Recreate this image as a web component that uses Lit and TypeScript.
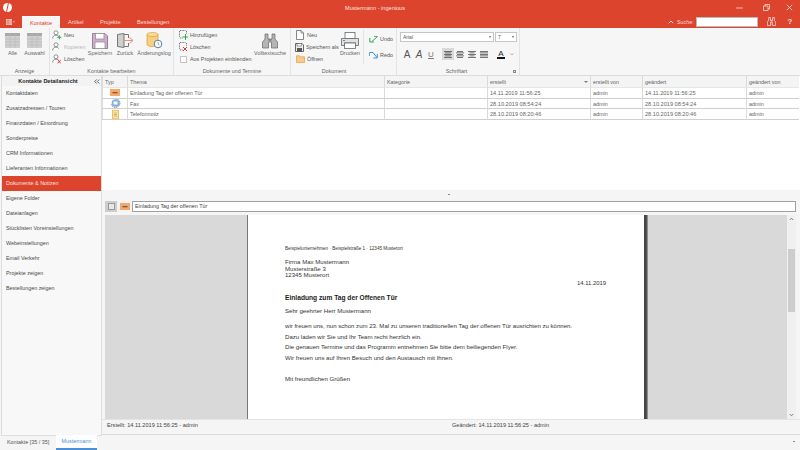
import { LitElement, html, css, svg } from "lit";
import { customElement } from "lit/decorators.js";

const person = (badge: string) => svg`<svg width="10" height="10" viewBox="0 0 10 10">
  <circle cx="4" cy="2.800" r="2" fill="#fff" stroke="#666" stroke-width=".7"/>
  <path d="M.7 8.600c0-2.400 1.400-3.400 3.300-3.400 1.200 0 2.200.4 2.800 1.300" fill="#fff" stroke="#666" stroke-width=".7"/>
  ${badge}</svg>`;
const plus = svg`<path d="M7.300 5.300v4M5.300 7.300h4" stroke="#35a853" stroke-width="1"/>`;
const cross = svg`<path d="M5.600 6l3.200 3.200M8.800 6L5.600 9.200" stroke="#d5392a" stroke-width="1"/>`;

const tableIcon = svg`<svg width="15" height="15" viewBox="0 0 15 15">
  <rect width="15" height="15" fill="#cfcfcf"/><rect width="15" height="3" fill="#a9a9a9"/>
  <path d="M0 6h15M0 9h15M0 12h15M5 0v15M10 0v15" stroke="#bbb" stroke-width=".6"/></svg>`;
const saveIcon = svg`<svg width="16" height="16" viewBox="0 0 16 16">
  <path d="M.5.500h12.500l2.500 2.500v12.500H.5z" fill="#d9a9d6" stroke="#8a8a8a"/>
  <rect x="3.500" y=".5" width="8.500" height="5.500" fill="#fff" stroke="#8a8a8a" stroke-width=".7"/>
  <rect x="3" y="9" width="10" height="6.500" fill="#fff" stroke="#8a8a8a" stroke-width=".7"/></svg>`;
const backIcon = svg`<svg width="17" height="15" viewBox="0 0 17 15">
  <path d="M.5 1.500 7 .5v14l-6.500-1z" fill="#cfcfcf" stroke="#777"/>
  <path d="M7 1.500h4.500v3.500M11.500 10v3.500H7" fill="none" stroke="#777"/>
  <path d="M6.500 7.500h9M12.500 4.500l3.500 3-3.500 3" fill="none" stroke="#f08a7a" stroke-width="1"/></svg>`;
const logIcon = svg`<svg width="17" height="17" viewBox="0 0 17 17">
  <path d="M1 2.500v10c0 1.200 2.500 2 5.500 2s5.500-.8 5.500-2v-10z" fill="#f6cf80" stroke="#e09a2c" stroke-width=".7"/>
  <ellipse cx="6.500" cy="2.500" rx="5.500" ry="2" fill="#f9dd9f" stroke="#e09a2c" stroke-width=".7"/>
  <circle cx="12" cy="12" r="3.800" fill="#fff" stroke="#5d7f9e"/><path d="M12 9.800V12l1.500 1" fill="none" stroke="#5d7f9e" stroke-width=".7"/></svg>`;
const docAdd = (c: any) => svg`<svg width="9" height="10" viewBox="0 0 9 10">
  <path d="M1 .5h5.500M.5 1v6.500M1 8h3M7.500 1v3" stroke="#444" stroke-width=".7" stroke-dasharray="1 .6" fill="none"/>${c}</svg>`;
const binoc = (c: string, w = 16, h = 16) => svg`<svg width="${w}" height="${h}" viewBox="0 0 16 16">
  <path d="M3 1h3v5h4V1h3v5l2.500 3v6H9.500V9h-3v6H.5V9L3 6z" fill="${c === "#fff" ? "none" : "#b5b5b5"}" stroke="${c === "#fff" ? "#fff" : "#666"}" stroke-width="${c === "#fff" ? 1.2 : .7}"/>
  <path d="M6.500 7h3" stroke="${c === "#fff" ? "#fff" : "#666"}"/></svg>`;
const docIcon = svg`<svg width="8" height="10" viewBox="0 0 8 10"><path d="M.5.500h4.500l2.500 2.500v6.500h-7z" fill="#fff" stroke="#555" stroke-width=".7"/><path d="M5 .5V3h2.500" fill="none" stroke="#555" stroke-width=".6"/></svg>`;
const saveAsIcon = svg`<svg width="9" height="9" viewBox="0 0 9 9"><path d="M.5.500h6.500l1.500 1.500v6.500h-8z" fill="#eee" stroke="#444" stroke-width=".8"/><rect x="2" y=".5" width="4.500" height="2.500" fill="#fff" stroke="#444" stroke-width=".5"/><rect x="2" y="5" width="5" height="3.500" fill="#555"/></svg>`;
const folderIcon = svg`<svg width="9" height="8" viewBox="0 0 9 8"><path d="M.5 7.500V.8h3l.8 1h4.200v5.700z" fill="#f8c98d" stroke="#ea9a3e" stroke-width=".7"/></svg>`;
const printIcon = svg`<svg width="18" height="17" viewBox="0 0 18 17">
  <rect x="4" y=".5" width="10" height="6" fill="#fff" stroke="#666" stroke-width=".8"/>
  <path d="M.5 6.500h17v7h-3V11h-11v2.500h-3z" fill="#e2e2e2" stroke="#666" stroke-width=".8"/>
  <rect x="3.500" y="11" width="11" height="5.500" fill="#fff" stroke="#666" stroke-width=".8"/>
  <path d="M2 8.500h2" stroke="#4a90d9"/></svg>`;
const undoIcon = svg`<svg width="9" height="8" viewBox="0 0 9 8"><path d="M8.500 1.500 3 6.500M.8 3v4h4" fill="none" stroke="#2ea65a" stroke-width="1"/><path d="M8.500 1.500H5" stroke="#2ea65a" stroke-width=".8"/></svg>`;
const redoIcon = svg`<svg width="9" height="8" viewBox="0 0 9 8"><path d="M.5 1.500H4L8 6.500M8.300 3v4h-4" fill="none" stroke="#3f8fd6" stroke-width="1"/><path d="M.5 1.500V5" stroke="#3f8fd6" stroke-width=".8"/></svg>`;
const alignIcon = (w: number[]) => svg`<svg width="8" height="7" viewBox="0 0 8 7">
  ${w.map((v, i) => svg`<rect x="${(8 - v) / 2}" y="${i * 1.5}" width="${v}" height=".8" fill="#555"/>`)}</svg>`;
const mailIcon = svg`<svg width="10" height="7" viewBox="0 0 10 7"><rect width="10" height="7" fill="#f4a96b"/><rect x="2.500" y="3" width="5" height="1.300" fill="#7a5a3a"/></svg>`;
const faxIcon = svg`<svg width="11" height="10" viewBox="0 0 11 10"><circle cx="5.500" cy="5" r="3.800" fill="#7fb1e3"/><path d="M5.500.6a4.400 4.400 0 1 1-4.200 5.700" fill="none" stroke="#555" stroke-width=".8" stroke-dasharray="1.500 .8"/><rect x="3.500" y="3.500" width="4" height="3" fill="#fff"/></svg>`;
const noteIcon = svg`<svg width="7" height="9" viewBox="0 0 7 9"><rect width="7" height="9" fill="#f8b95f"/><rect x="1" y=".8" width="5" height="7.500" fill="#fbe3a7"/><path d="M2 3h3M2 4.500h3M2 6h3" stroke="#a8844a" stroke-width=".5"/></svg>`;
const dblChev = svg`<svg width="6" height="5" viewBox="0 0 6 5"><path d="M2.700.5.700 2.500l2 2M5.300.5l-2 2 2 2" fill="none" stroke="#444" stroke-width=".8"/></svg>`;

const navItems = ["Kontaktdaten", "Zusatzadressen / Touren", "Finanzdaten / Einordnung", "Sonderpreise", "CRM Informationen", "Lieferanten Informationen", "Dokumente & Notizen", "Eigene Folder", "Dateianlagen", "Stücklisten Voreinstellungen", "Webeinstellungen", "Email Verkehr", "Projekte zeigen", "Bestellungen zeigen"];
const rows = [
  { icon: mailIcon, t: "Einladung Tag der offenen Tür", c: "14.11.2019 11:56:25", m: "14.11.2019 11:56:25" },
  { icon: faxIcon, t: "Fax", c: "28.10.2019 08:54:24", m: "28.10.2019 08:54:24" },
  { icon: noteIcon, t: "Telefonnotiz", c: "28.10.2019 08:20:46", m: "28.10.2019 08:20:46" },
];

@customElement("app-root")
export class AppRoot extends LitElement {
  static styles = css`
    :host { display: block; width: 800px; height: 450px; overflow: hidden; background: #f5f5f5;
      font-family: "Liberation Sans", Arial, sans-serif; font-size: 5.400px; color: #444; }
    .app { display: flex; flex-direction: column; height: 450px; }
    svg { display: block; flex: none; }

    .title { height: 28px; background: #dc442e; color: #fff; display: flex; flex-direction: column; flex: none; }
    .t1 { height: 15px; display: flex; align-items: center; padding-left: 3px; }
    .logo { width: 9px; height: 9px; border-radius: 50%; background: #fff; position: relative; overflow: hidden; }
    .logo::after { content: ""; position: absolute; left: 3.700px; top: -1px; width: 1.300px; height: 11px; background: #dc442e; transform: rotate(12deg); }
    .wintitle { margin-left: 333px; width: 60px; font-size: 5.600px; color: #fbe3df; }
    .winbtns { margin-left: 331px; display: flex; gap: 20px; }
    .winbtns svg { width: 7px; height: 7px; }
    .winbtns .x { margin-left: -4px; }
    .t2 { height: 13px; display: flex; align-items: flex-end; }
    .menu { width: 22px; height: 12px; display: flex; align-items: center; padding-left: 6px; box-sizing: border-box; gap: 1px; }
    .tab { height: 12.500px; line-height: 13px; color: #fbdcd6; font-size: 5.600px; }
    .tab.on { background: #f5f5f5; color: #dc442e; border-top: 1px solid #fff; box-sizing: border-box; width: 38px; text-align: center; }
    .t-a { margin-left: 8px; width: 32px; }
    .t-p { width: 37px; }
    .t-b { width: 0; flex: 1; }
    .sr { display: flex; align-items: center; height: 13px; }
    .sr .lbl { color: #fbdcd6; margin-left: 3px; width: 19px; }
    .sr input { width: 62px; height: 10px; box-sizing: border-box; border: 1px solid #bbb; background: #fff; padding: 0; margin: 0; }
    .chev { width: 6px; }
    .sr .q { width: 6px; margin-left: 11px; margin-right: 7px; color: #fff; font-size: 8px; font-weight: bold; text-align: center; opacity: .85; }
    .sr .bn { margin-left: 9px; }

    .ribbon { height: 48px; flex: none; display: flex; background: #f6f6f6; border-bottom: 1px solid #dcdcdc; box-sizing: border-box; }
    .grp { display: flex; flex-direction: column; border-right: 1px solid #e3e3e3; box-sizing: border-box; flex: none; }
    .gb { height: 38px; display: flex; flex: none; }
    .gl { height: 9px; line-height: 10px; text-align: center; color: #666; }
    .big { display: flex; flex-direction: column; align-items: center; padding-top: 4px; box-sizing: border-box; flex: none; }
    .ic { height: 17px; display: flex; align-items: center; justify-content: center; }
    .big .lb { line-height: 8px; color: #666; white-space: nowrap; }
    .col { display: flex; flex-direction: column; padding-top: 1px; flex: none; box-sizing: border-box; }
    .sm { height: 12px; display: flex; align-items: center; gap: 2px; white-space: nowrap; color: #555; }
    .sm .box { width: 10px; display: flex; justify-content: center; }
    .dim { color: #aaa; opacity: .8; }
    .chk { width: 7px; height: 7px; background: #fff; border: 1px solid #c4c4c4; box-sizing: border-box; margin: 0 1.500px; }
    .vsep { width: 1px; height: 34px; margin: 2px 5px 0 1px; background: #e3e3e3; flex: none; }
    .ur { height: 16px; }
    .font { padding: 4px 0 0 3px; display: flex; flex-direction: column; box-sizing: border-box; }
    .selrow { display: flex; gap: 1px; height: 10px; }
    .sel { background: #fff; border: 1px solid #c6c6c6; box-sizing: border-box; display: flex; align-items: center; justify-content: space-between; padding: 0 2px; color: #555; font-size: 5px; }
    .sel i { width: 0; height: 0; border: 1.500px solid transparent; border-top: 2px solid #666; border-bottom: 0; }
    .fmt { display: flex; align-items: center; margin-top: 6px; height: 12px; color: #555; }
    .fA { font-size: 10px; width: 12px; text-align: center; font-family: "Liberation Sans", sans-serif; }
    .f1 { margin-left: 1px; }
    .fI { font-style: italic; }
    .fU { font-size: 8px; text-decoration: underline; color: #777; }
    .al { width: 12px; height: 12px; display: flex; align-items: center; justify-content: center; }
    .al.on { background: #d9d9d9; margin-left: 5px; }
    .color { margin-left: 6px; display: flex; flex-direction: column; align-items: center; font-size: 8px; line-height: 7px; width: 10px; color: #222; }
    .color b { width: 8px; height: 2px; background: #111; }
    .caret { margin-left: 4px; }
    .launch { margin: 4px 3px 0 0; width: 3px; height: 3px; box-sizing: border-box; border: .6px solid #888; flex: none; }
    .glrow { display: flex; height: 9px; }
    .glrow .gl { flex: 1; padding-left: 3px; }

    .content { flex: 1; display: flex; min-height: 0; }
    .nav { width: 99px; margin-left: 1px; background: #f8f8f8; border: solid #dedede; border-width: 0 1px 1px 1px; display: flex; flex-direction: column; height: 359px; flex: none; }
    .nh { height: 10px; display: flex; align-items: center; background: #f3f3f3; font-weight: bold; color: #222; font-size: 5.500px; }
    .nh span { flex: 1; text-align: center; }
    .nh em { width: 7px; display: flex; }
    .ni { height: 15px; line-height: 15px; padding-left: 4px; color: #4a4a4a; }
    .ni.on { background: #dc442e; color: #fbe3df; }

    .main { flex: 1; display: flex; flex-direction: column; min-width: 0; }
    .table { height: 114px; background: #fff; flex: none; display: grid; grid-template-columns: 25px 257px 103px 103px 52px 104px 53px;
      grid-template-rows: 12px repeat(3, 10.670px); align-content: start; }
    .hd { background: #f4f4f4; border-left: 1px solid #dadada; padding-left: 2px; line-height: 12px; color: #666; border-bottom: 1px solid #e6e6e6; box-sizing: border-box; position: relative; }
    .hd i { position: absolute; right: 2px; top: 5px; width: 0; height: 0; border: 2px solid transparent; border-top: 2px solid #777; border-bottom: 0; }
    .c { border-left: 1px solid #dadada; border-bottom: 1px solid #cfcfcf; padding-left: 2px; line-height: 10px; box-sizing: border-box; color: #666; white-space: nowrap; overflow: hidden; }
    .c.dt { font-size: 5.600px; }
    .cic { display: flex; justify-content: center; align-items: center; padding: 0; }
    .split { height: 9px; flex: none; display: flex; align-items: center; justify-content: center; }
    .split b { width: 2px; height: 1px; background: #888; margin-right: 4px; }
    .tb { height: 16px; flex: none; display: flex; align-items: flex-start; padding: 2px 4px 0 3px; gap: 3px; box-sizing: border-box; }
    .tbtn { width: 12px; height: 11px; background: #cdcdcd; display: flex; align-items: center; justify-content: center; flex: none; }
    .tbtn div { width: 5px; height: 5px; border: 1px solid #999; background: #e8e8e8; }
    .tic { height: 11px; display: flex; align-items: center; flex: none; }
    .inp { flex: 1; height: 11px; box-sizing: border-box; border: 1px solid #a0a0a0; background: #fff; margin-left: -1px; padding-left: 2px; line-height: 9px; color: #444; }
    .viewer { height: 204px; flex: none; margin: 0 4px 0 3px; display: flex; background: #d9d9d9; }
    .gray { flex: 1; }
    .gl1 { width: 142px; flex: none; }
    .page { width: 397px; flex: none; background: #fff; border-left: 1.300px solid #777; display: flex; flex-direction: column; padding-left: 37px; box-sizing: border-box; color: #333; font-size: 6.070px; }
    .edge { width: 4px; flex: none; background: linear-gradient(90deg, #444 0 55%, #aaa 100%); }
    .page div { white-space: nowrap; flex: none; line-height: 7px; }
    .sender { font-size: 4.600px; margin-top: 30px; }
    .firma { margin-top: 7px; }
    .addr { margin-top: -.5px; }
    .date { margin-left: 292px; margin-top: 1px; font-size: 5.900px; }
    .hl { font-weight: bold; font-size: 6.660px; margin-top: 7px; color: #222; }
    .sg { margin-top: 7px; }
    .b1 { margin-top: 8px; }
    .b2 { margin-top: 3.700px; }
    .mf { margin-top: 14px; }
    .sb { width: 9px; flex: none; background: #f0f0f0; display: flex; flex-direction: column; align-items: center; }
    .arrow { width: 9px; height: 8px; display: flex; align-items: center; justify-content: center; flex: none; }
    .thumb { width: 7px; height: 63px; background: #cdcdcd; flex: none; margin-top: 26px; margin-bottom: auto; }
    .status { height: 16px; flex: none; display: flex; align-items: flex-start; padding-left: 5px; padding-top: 2px; box-sizing: border-box; color: #444; border-top: 1px solid #e4e4e4; border-bottom: 1px solid #dcdcdc; line-height: 7px; font-size: 5.600px; }
    .status span:first-child { width: 345px; }

    .bottom { height: 15px; flex: none; display: flex; align-items: stretch; }
    .bt { padding-left: 7px; width: 56px; box-sizing: border-box; line-height: 14px; color: #555; }
    .bt2 { width: 41px; box-sizing: border-box; text-align: center; line-height: 13px; color: #4a90d9; background: #fff; border-bottom: 2px solid #4a90d9; }
    .dot { margin-left: auto; margin-right: 5px; margin-top: 6px; width: 2px; height: 1px; background: #888; }
  `;

  private big(icon: any, label: string, w: number) {
    return html`<div class="big" style="width:${w}px"><div class="ic">${icon}</div><div class="lb">${label}</div></div>`;
  }
  private sm(icon: any, label: string, cls = "") {
    return html`<div class="sm"><div class="box">${icon}</div><span class=${cls}>${label}</span></div>`;
  }

  render() {
    return html`<div class="app">
      <div class="title">
        <div class="t1">
          <div class="logo"></div>
          <div class="wintitle">Mustermann - ingenious</div>
          <div class="winbtns">
            <svg viewBox="0 0 7 7"><path d="M0 4h7" stroke="#fff" stroke-width=".8" opacity=".8"/></svg>
            <svg viewBox="0 0 7 7"><path d="M.5 2h4.500v4.500H.5zM2 2V.5h4.500V5H5" fill="none" stroke="#fff" stroke-width=".8" opacity=".8"/></svg>
            <svg class="x" viewBox="0 0 7 7"><path d="M.8.800l5.400 5.400M6.200.800 .8 6.200" stroke="#fff" stroke-width=".8" opacity=".85"/></svg>
          </div>
        </div>
        <div class="t2">
          <div class="menu"><svg width="6" height="6" viewBox="0 0 6 6"><rect width="6" height="6" fill="#f2c8c0"/><path d="M2 0v6M0 2h6M0 4h6" stroke="#dc442e" stroke-width=".5"/></svg><svg width="2" height="2" viewBox="0 0 2 2"><path d="M0 .5h2L1 1.500z" fill="#fff"/></svg></div>
          <div class="tab on">Kontakte</div>
          <div class="tab t-a">Artikel</div>
          <div class="tab t-p">Projekte</div>
          <div class="tab t-b">Bestellungen</div>
          <div class="sr">
            <svg class="chev" width="6" height="4" viewBox="0 0 6 4"><path d="M.8 3.200 3 1l2.200 2.200" fill="none" stroke="#fff" stroke-width=".8"/></svg>
            <span class="lbl">Suche:</span>
            <input />
            <span class="bn">${binoc("#fff", 9, 9)}</span>
            <span class="q">?</span>
          </div>
        </div>
      </div>

      <div class="ribbon">
        <div class="grp" style="width:50px">
          <div class="gb" style="padding-left:1.500px">${this.big(tableIcon, "Alle", 22)}${this.big(tableIcon, "Auswahl", 22)}</div>
          <div class="gl">Anzeige</div>
        </div>
        <div class="grp" style="width:124px">
          <div class="gb" style="padding-left:2px">
            <div class="col" style="width:35px">
              ${this.sm(person(plus), "Neu")}
              ${this.sm(person(""), "Kopieren", "dim")}
              ${this.sm(person(cross), "Löschen")}
            </div>
            ${this.big(saveIcon, "Speichern", 26)}${this.big(backIcon, "Zurück", 24)}${this.big(logIcon, "Änderungslog", 34)}
          </div>
          <div class="gl">Kontakte bearbeiten</div>
        </div>
        <div class="grp" style="width:117px">
          <div class="gb" style="padding-left:4px">
            <div class="col" style="width:76px">
              ${this.sm(docAdd(svg`<path d="M6.500 4v6M3.500 7h6" stroke="#35a853"/>`), "Hinzufügen")}
              ${this.sm(docAdd(svg`<path d="M4 5l4 4M8 5 4 9" stroke="#d5392a"/>`), "Löschen")}
              ${this.sm(html`<div class="chk"></div>`, "Aus Projekten einblenden")}
            </div>
            ${this.big(binoc("#777"), "Volltextsuche", 32)}
          </div>
          <div class="gl">Dokumente und Termine</div>
        </div>
        <div class="grp" style="width:106px">
          <div class="gb" style="padding-left:4px">
            <div class="col" style="width:43px">
              ${this.sm(docIcon, "Neu")}
              ${this.sm(saveAsIcon, "Speichern als")}
              ${this.sm(folderIcon, "Öffnen")}
            </div>
            ${this.big(printIcon, "Drucken", 24)}
            <div class="vsep"></div>
            <div class="col" style="padding-top:3px">
              <div class="sm ur">${undoIcon}<span>Undo</span></div>
              <div class="sm ur">${redoIcon}<span>Redo</span></div>
            </div>
          </div>
          <div class="gl" style="width:86px">Dokument</div>
        </div>
        <div class="grp" style="width:123px">
          <div class="gb font">
            <div class="selrow">
              <div class="sel" style="width:94px">Arial<i></i></div>
              <div class="sel" style="width:22px">7<i></i></div>
            </div>
            <div class="fmt">
              <span class="fA f1">A</span>
              <span class="fA fI">A</span>
              <span class="fA fU">U</span>
              <span class="al on">${alignIcon([8, 6, 8, 6, 8])}</span>
              <span class="al">${alignIcon([6, 8, 6, 8, 6])}</span>
              <span class="al">${alignIcon([8, 5, 8, 5, 8])}</span>
              <span class="al">${alignIcon([8, 8, 8, 8, 8])}</span>
              <span class="color">A<b></b></span>
              <svg class="caret" width="4" height="3" viewBox="0 0 4 3"><path d="M.5.500 2 2 3.500.500" fill="none" stroke="#888" stroke-width=".6"/></svg>
            </div>
          </div>
          <div class="glrow"><div class="gl">Schriftart</div><div class="launch"></div></div>
        </div>
      </div>

      <div class="content">
        <div class="nav">
          <div class="nh"><span>Kontakte Detailansicht</span><em>${dblChev}</em></div>
          ${navItems.map((n, i) => html`<div class="ni ${i === 6 ? "on" : ""}">${n}</div>`)}
        </div>
        <div class="main">
          <div class="table">
            <div class="hd">Typ</div><div class="hd">Thema</div><div class="hd">Kategorie</div>
            <div class="hd">erstellt<i></i></div><div class="hd">erstellt von</div><div class="hd">geändert</div><div class="hd">geändert von</div>
            ${rows.map((r) => html`
              <div class="c cic">${r.icon}</div><div class="c">${r.t}</div><div class="c"></div>
              <div class="c dt">${r.c}</div><div class="c">admin</div><div class="c dt">${r.m}</div><div class="c">admin</div>`)}
          </div>
          <div class="split"><b></b></div>
          <div class="tb">
            <div class="tbtn"><div></div></div>
            <div class="tic">${mailIcon}</div>
            <div class="inp">Einladung Tag der offenen Tür</div>
          </div>
          <div class="viewer">
            <div class="gl1"></div>
            <div class="page">
              <div class="sender">Beispielunternehmen · Beispielstraße 1 · 12345 Musterort</div>
              <div class="firma">Firma Max Mustermann</div>
              <div class="addr">Musterstraße 3</div>
              <div class="addr">12345 Musterort</div>
              <div class="date">14.11.2019</div>
              <div class="hl">Einladung zum Tag der Offenen Tür</div>
              <div class="sg">Sehr geehrter Herr Mustermann</div>
              <div class="b1">wir freuen uns, nun schon zum 23. Mal zu unseren traditionellen Tag der offenen Tür ausrichten zu können.</div>
              <div class="b2">Dazu laden wir Sie und Ihr Team recht herzlich ein.</div>
              <div class="b2">Die genauen Termine und das Programm entnehmen Sie bitte dem beiliegenden Flyer.</div>
              <div class="b2">Wir freuen uns auf Ihren Besuch und den Austausch mit Ihnen.</div>
              <div class="mf">Mit freundlichen Grüßen</div>
            </div>
            <div class="edge"></div>
            <div class="gray"></div>
            <div class="sb">
              <div class="arrow"><svg width="5" height="4" viewBox="0 0 5 4"><path d="M.8 3 2.500 1.200 4.200 3" fill="none" stroke="#666" stroke-width=".8"/></svg></div>
              <div class="thumb"></div>
              <div class="arrow"><svg width="5" height="4" viewBox="0 0 5 4"><path d="M.8 1 2.500 2.800 4.200 1" fill="none" stroke="#666" stroke-width=".8"/></svg></div>
            </div>
          </div>
          <div class="status"><span>Erstellt: 14.11.2019 11:56:25 - admin</span><span>Geändert: 14.11.2019 11:56:25 - admin</span></div>
        </div>
      </div>

      <div class="bottom">
        <div class="bt">Kontakte [35 / 35]</div>
        <div class="bt2">Mustermann</div>
        <div class="dot"></div>
      </div>
    </div>`;
  }
}
